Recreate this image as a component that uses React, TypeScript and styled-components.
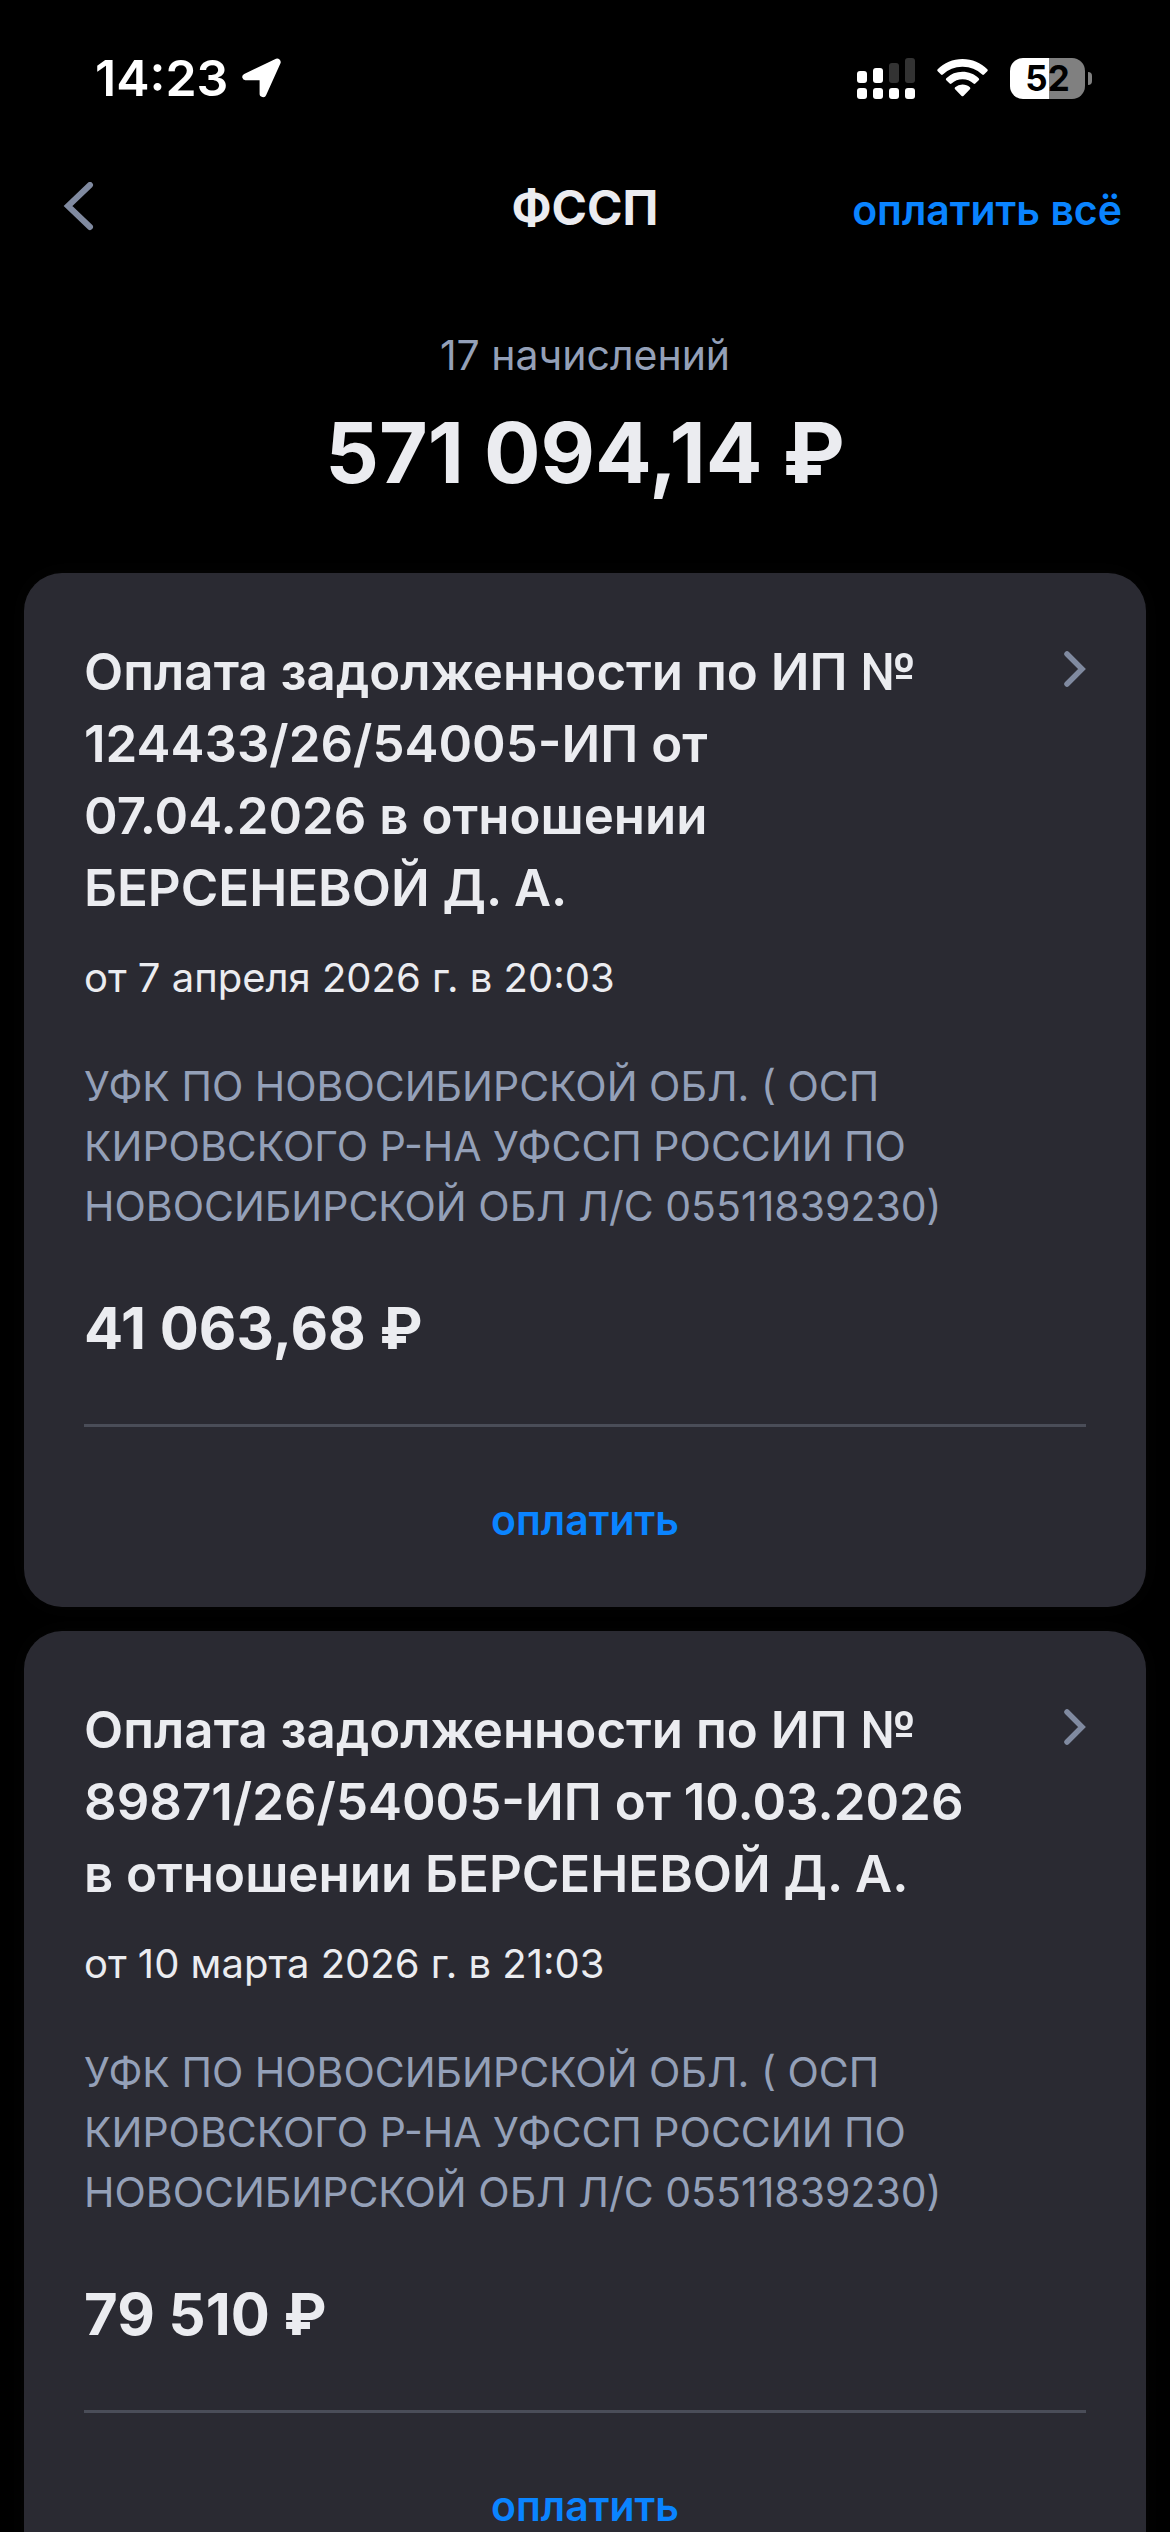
import React from "react";
import styled, { createGlobalStyle } from "styled-components";

const GlobalStyle = createGlobalStyle`
  *, *::before, *::after { box-sizing: border-box; }
  body {
    margin: 0;
    background: #000;
    color: #ebecf0;
    font-family: Inter, "Noto Sans", sans-serif;
    -webkit-font-smoothing: antialiased;
  }
  h1, h2, p { margin: 0; }
  button { border: 0; padding: 0; background: none; font: inherit; color: inherit; cursor: pointer; }
`;

const Screen = styled.div`
  display: flex;
  flex-direction: column;
  height: 100vh;
  background: #000;
`;

const StatusBar = styled.header`
  display: flex;
  align-items: center;
  justify-content: space-between;
  height: 156px;
  padding: 0 78px 0 95px;
  flex: none;
`;

const StatusGroup = styled.div<{ $gap: number }>`
  display: flex;
  align-items: center;
  gap: ${(p) => p.$gap}px;
`;

const Clock = styled.time`
  color: #fff;
  font-size: 50px;
  line-height: 60px;
  font-weight: 600;
`;

const Battery = styled.div`
  display: flex;
  align-items: center;
  gap: 3px;
`;

const BatteryBody = styled.div<{ $level: number }>`
  display: flex;
  align-items: center;
  justify-content: center;
  width: 75px;
  height: 41px;
  border-radius: 13px;
  background: linear-gradient(90deg, #fff ${(p) => p.$level}%, #808080 ${(p) => p.$level}%);
  color: #000;
  font-size: 35px;
  line-height: 41px;
  font-weight: 700;
`;

const BatteryTip = styled.div`
  width: 4px;
  height: 13px;
  border-radius: 0 4px 4px 0;
  background: #808080;
`;

const NavBar = styled.nav`
  display: grid;
  grid-template-columns: 1fr auto 1fr;
  align-items: center;
  height: 104px;
  padding: 0 48px;
  flex: none;
`;

const BackButton = styled.button`
  display: flex;
  justify-self: start;
  padding: 12px;
`;

const NavTitle = styled.h1`
  font-size: 48px;
  line-height: 60px;
  font-weight: 700;
`;

const LinkButton = styled.button`
  color: #0a84ff;
  font-size: 41px;
  line-height: 60px;
  font-weight: 600;
`;

const NavAction = styled(LinkButton)`
  justify-self: end;
  padding-top: 4px;
`;

const Content = styled.main`
  flex: 1;
  min-height: 0;
  overflow-y: auto;
  scrollbar-width: none;
`;

const Summary = styled.section`
  display: flex;
  flex-direction: column;
  align-items: center;
  gap: 20px;
  padding: 65px 24px 72px;
`;

const Muted = styled.p`
  color: #94a0b8;
  font-size: 41px;
  line-height: 60px;
`;

const Total = styled.p`
  font-size: 84px;
  line-height: 96px;
  font-weight: 700;
`;

const CardList = styled.div`
  display: flex;
  flex-direction: column;
  gap: 24px;
  padding: 0 24px 24px;
`;

const Card = styled.article`
  padding: 0 60px;
  border-radius: 38px;
  background: #2a2a32;
  box-shadow: 0 0 24px rgba(255, 255, 255, 0.02);
`;

const CardBody = styled.div`
  padding: 63px 0 60px;
  border-bottom: 3px solid #4a4d58;
`;

const CardHead = styled.div`
  display: flex;
  align-items: flex-start;
  justify-content: space-between;
  gap: 24px;
`;

const CardTitle = styled.h2`
  max-width: 900px;
  font-size: 51px;
  line-height: 72px;
  font-weight: 600;
`;

const OpenButton = styled.button`
  display: flex;
  flex: none;
  padding: 15px 0;
`;

const Issued = styled.p`
  margin-top: 24px;
  font-size: 40px;
  line-height: 60px;
`;

const Payee = styled(Muted)`
  margin-top: 48px;
  max-width: 900px;
`;

const Amount = styled.p`
  margin-top: 56px;
  font-size: 58px;
  line-height: 72px;
  font-weight: 700;
`;

const PayButton = styled(LinkButton)`
  display: block;
  width: 100%;
  height: 180px;
  padding-top: 5px;
`;

const LocationIcon = () => (
  <svg width="40" height="40" viewBox="0 0 40 40" aria-hidden="true">
    <path
      d="M3.8 22.2H17.6V35.6a3.4 3.4 0 0 0 6.6 1.3L38.6 5A3.6 3.6 0 0 0 34 .7L2.2 15.9a3.3 3.3 0 0 0 1.6 6.3Z"
      fill="#fff"
    />
  </svg>
);

const SignalIcon = () => (
  <svg width="58" height="41" viewBox="0 0 58 41" aria-hidden="true">
    <g fill="#fff">
      <rect x="0" y="13" width="10" height="12" rx="3" />
      <rect x="16" y="10" width="10" height="15" rx="3" />
      {[0, 16, 32, 48].map((x) => (
        <rect key={x} x={x} y="30" width="10" height="11" rx="3" />
      ))}
    </g>
    <g fill="#333">
      <rect x="32" y="5" width="10" height="20" rx="3" />
      <rect x="48" y="0" width="10" height="25" rx="3" />
    </g>
  </svg>
);

const WifiIcon = () => (
  <svg width="51" height="38" viewBox="0 0 51 38" aria-hidden="true" fill="#fff">
    <path d="M25.5 0C35.2 0 44 3.8 50.3 10.2q.9 1 0 2L47 15.5q-.9.8-1.8 0A28.4 28.4 0 0 0 25.5 7.8A28.4 28.4 0 0 0 5.8 15.5q-.9.8-1.8 0L.7 12.2q-.9-1 0-2C7 3.8 15.8 0 25.5 0Z" />
    <path d="M25.5 12.8c6.2 0 11.9 2.4 16.2 6.4q1 1 0 2l-3.4 3.3q-.9.8-1.8 0a16.2 16.2 0 0 0-22 0q-.9.8-1.8 0l-3.4-3.3q-1-1 0-2a23.7 23.7 0 0 1 16.2-6.4Z" />
    <path d="M25.5 25.5c2.8 0 5.4 1 7.4 2.8q1 1 0 2l-6.5 6.6q-.9.8-1.8 0l-6.5-6.6q-1-1 0-2a11 11 0 0 1 7.4-2.8Z" />
  </svg>
);

const BackIcon = () => (
  <svg width="36" height="52" viewBox="0 0 36 52" aria-hidden="true">
    <path d="M30 3 8 24l22 21" fill="none" stroke="#808aa0" strokeWidth="6" strokeLinecap="round" />
  </svg>
);

const ChevronIcon = () => (
  <svg width="22" height="36" viewBox="0 0 22 36" aria-hidden="true">
    <path d="m3 3 15 15L3 33" fill="none" stroke="#808aa0" strokeWidth="5.5" strokeLinecap="round" />
  </svg>
);

const PAYEE =
  "УФК ПО НОВОСИБИРСКОЙ ОБЛ. ( ОСП КИРОВСКОГО Р-НА УФССП РОССИИ ПО НОВОСИБИРСКОЙ ОБЛ Л/С 05511839230)";

const charges = [
  {
    title: "Оплата задолженности по ИП № 124433/26/54005-ИП от 07.04.2026 в отношении БЕРСЕНЕВОЙ Д. А.",
    issued: "от 7 апреля 2026 г. в 20:03",
    amount: "41 063,68 ₽",
  },
  {
    title: "Оплата задолженности по ИП № 89871/26/54005-ИП от 10.03.2026 в отношении БЕРСЕНЕВОЙ Д. А.",
    issued: "от 10 марта 2026 г. в 21:03",
    amount: "79 510 ₽",
  },
];

export default function App() {
  return (
    <Screen>
      <GlobalStyle />
      <StatusBar>
        <StatusGroup $gap={14}>
          <Clock>14:23</Clock>
          <LocationIcon />
        </StatusGroup>
        <StatusGroup $gap={22}>
          <SignalIcon />
          <WifiIcon />
          <Battery>
            <BatteryBody $level={52}>52</BatteryBody>
            <BatteryTip />
          </Battery>
        </StatusGroup>
      </StatusBar>
      <NavBar>
        <BackButton aria-label="Назад">
          <BackIcon />
        </BackButton>
        <NavTitle>ФССП</NavTitle>
        <NavAction>оплатить всё</NavAction>
      </NavBar>
      <Content>
        <Summary>
          <Muted>17 начислений</Muted>
          <Total>571 094,14 ₽</Total>
        </Summary>
        <CardList>
          {charges.map((charge) => (
            <Card key={charge.title}>
              <CardBody>
                <CardHead>
                  <CardTitle>{charge.title}</CardTitle>
                  <OpenButton aria-label="Подробнее">
                    <ChevronIcon />
                  </OpenButton>
                </CardHead>
                <Issued>{charge.issued}</Issued>
                <Payee>{PAYEE}</Payee>
                <Amount>{charge.amount}</Amount>
              </CardBody>
              <PayButton>оплатить</PayButton>
            </Card>
          ))}
        </CardList>
      </Content>
    </Screen>
  );
}
